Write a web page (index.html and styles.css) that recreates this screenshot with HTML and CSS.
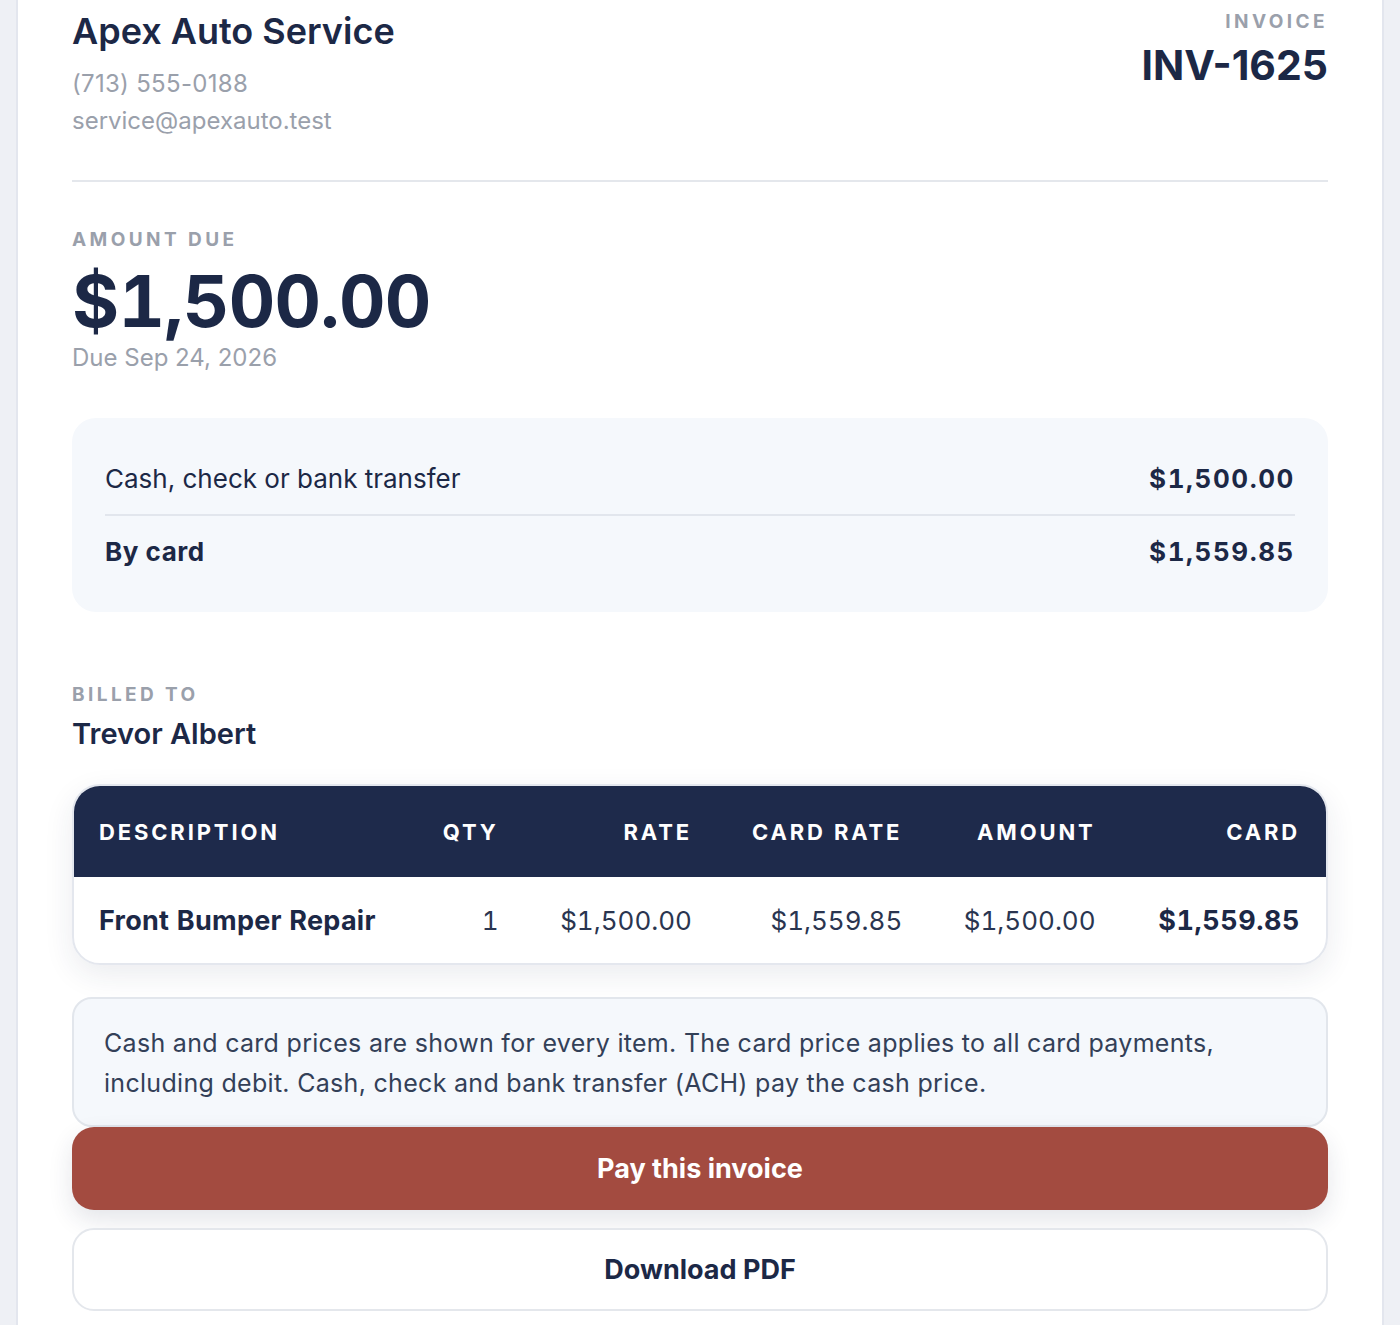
FILE: index.html
```html
<!DOCTYPE html>
<html lang="en">
<head>
  <meta charset="UTF-8" />
  <meta name="viewport" content="width=device-width, initial-scale=1" />
  <title>Invoice INV-1625 - Apex Auto Service</title>
  <link rel="stylesheet" href="styles.css">
</head>
<body>
  <main class="invoice">
    <header class="invoice-head">
      <div class="shop">
        <h1>Apex Auto Service</h1>
        <p class="phone">(713) 555-0188</p>
        <p>service@apexauto.test</p>
      </div>
      <div class="invoice-id">
        <span class="label">Invoice</span>
        <strong>INV-1625</strong>
      </div>
    </header>

    <section class="due">
      <span class="label">Amount due</span>
      <div class="due-amount">$1,500.00</div>
      <p class="due-date">Due Sep 24, 2026</p>
    </section>

    <section class="pay-options">
      <div class="pay-row">
        <span>Cash, check or bank transfer</span>
        <strong>$1,500.00</strong>
      </div>
      <div class="pay-row card">
        <span>By card</span>
        <strong>$1,559.85</strong>
      </div>
    </section>

    <section class="billed">
      <span class="label">Billed to</span>
      <h2>Trevor Albert</h2>
    </section>

    <div class="items">
      <table>
        <thead>
          <tr>
            <th>Description</th>
            <th>Qty</th>
            <th>Rate</th>
            <th>Card rate</th>
            <th>Amount</th>
            <th>Card</th>
          </tr>
        </thead>
        <tbody>
          <tr>
            <td>Front Bumper Repair</td>
            <td>1</td>
            <td>$1,500.00</td>
            <td>$1,559.85</td>
            <td>$1,500.00</td>
            <td>$1,559.85</td>
          </tr>
        </tbody>
      </table>
    </div>

    <p class="note">Cash and card prices are shown for every item. The card price applies to all card payments, including debit. Cash, check and bank transfer (ACH) pay the cash price.</p>

    <div class="actions">
      <button class="btn-pay">Pay this invoice</button>
      <button class="btn-pdf">Download PDF</button>
    </div>
  </main>
</body>
</html>
```

FILE: styles.css
```css
* {
  box-sizing: border-box;
  font-family: Inter, "Noto Sans", sans-serif;
}

body {
  margin: 0;
  background: #eef0f5;
  color: #1c2846;
}

.invoice {
  background: white;
  margin: 0 16px;
  border-left: 2px solid #e3e6ee;
  border-right: 2px solid #e3e6ee;
  padding: 10px 54px 16px;
  min-height: 1325px;
}

.label {
  display: block;
  font-size: 19px;
  font-weight: 700;
  letter-spacing: 0.18em;
  text-transform: uppercase;
  color: #9aa0ab;
}

/* header */
.invoice-head {
  display: flex;
  justify-content: space-between;
  align-items: flex-start;
  padding-bottom: 41px;
  border-bottom: 2px solid #e4e7ec;
}

.shop h1 {
  margin: 0 0 12px;
  font-size: 36px;
  font-weight: 600;
  line-height: 1.2;
}

.shop p {
  margin: 0;
  font-size: 24px;
  line-height: 37px;
  color: #9aa0ab;
}

.shop .phone {
  letter-spacing: 0.3px;
}

.invoice-id {
  text-align: right;
}

.invoice-id strong {
  display: block;
  margin-top: 8px;
  font-size: 41px;
  font-weight: 700;
  line-height: 1.2;
}

/* amount due */
.due {
  padding-top: 46px;
}

.due-amount {
  font-size: 72px;
  font-weight: 700;
  line-height: 1;
  margin-top: 14px;
  letter-spacing: -0.01em;
  font-variant-numeric: tabular-nums;
}

.due-date {
  margin: 6px 0 0;
  font-size: 24px;
  color: #9aa0ab;
}

/* payment options */
.pay-options {
  margin-top: 46px;
  background: #f5f8fc;
  border-radius: 24px;
  padding: 25px 33px 25px;
}

.pay-row {
  display: flex;
  justify-content: space-between;
  align-items: center;
  font-size: 26px;
  padding: 20px 0;
}

.pay-row + .pay-row {
  border-top: 2px solid #e2e6ed;
}

.pay-row strong {
  font-weight: 700;
  letter-spacing: 0.06em;
  font-variant-numeric: tabular-nums;
}

.pay-row.card span {
  font-weight: 700;
  letter-spacing: 0.02em;
}

/* billed to */
.billed {
  margin-top: 71px;
}

.billed h2 {
  margin: 10px 0 0;
  font-size: 29px;
  font-weight: 600;
}

/* items */
.items {
  margin-top: 33px;
  border: 2px solid #e4e7ee;
  border-radius: 28px;
  overflow: hidden;
  box-shadow: 0 10px 30px rgba(30, 42, 75, 0.09);
}

.items table {
  width: 100%;
  border-collapse: collapse;
  table-layout: fixed;
}

.items th {
  background: #1e2a4b;
  color: white;
  font-size: 22px;
  font-weight: 700;
  letter-spacing: 0.13em;
  text-transform: uppercase;
  height: 91px;
  text-align: right;
}

.items td {
  font-size: 26px;
  height: 86px;
  text-align: right;
  color: #2a3550;
  font-variant-numeric: tabular-nums;
}

.items th:nth-child(1), .items td:nth-child(1) { width: 346px; text-align: left; padding-left: 25px; }
.items th:nth-child(2), .items td:nth-child(2) { width: 79px; }
.items th:nth-child(3), .items td:nth-child(3) { width: 193px; }
.items th:nth-child(4), .items td:nth-child(4) { width: 210px; }
.items th:nth-child(5), .items td:nth-child(5) { width: 193px; }
.items th:nth-child(6), .items td:nth-child(6) { width: 229px; padding-right: 26px; }

.items td:first-child,
.items td:last-child {
  font-size: 27px;
  font-weight: 700;
  color: #1c2846;
}

.items td:first-child {
  letter-spacing: 0.01em;
}

.items td:last-child {
  letter-spacing: 0.02em;
}

/* note + actions */
.note {
  margin: 32px 0 0;
  background: #f5f8fc;
  border: 2px solid #e2e6ec;
  border-radius: 20px;
  padding: 24px 30px 22px;
  font-size: 25px;
  letter-spacing: 0.3px;
  line-height: 40px;
  color: #334058;
}

.actions {
  display: flex;
  flex-direction: column;
  gap: 18px;
}

.actions button {
  height: 83px;
  border-radius: 22px;
  font-size: 27px;
  font-weight: 700;
  cursor: pointer;
}

.btn-pay {
  background: #a34b40;
  color: white;
  border: none;
  box-shadow: 0 10px 24px rgba(30, 42, 75, 0.12);
}

.btn-pdf {
  background: white;
  color: #1c2846;
  border: 2px solid #e4e7ec;
}
```
